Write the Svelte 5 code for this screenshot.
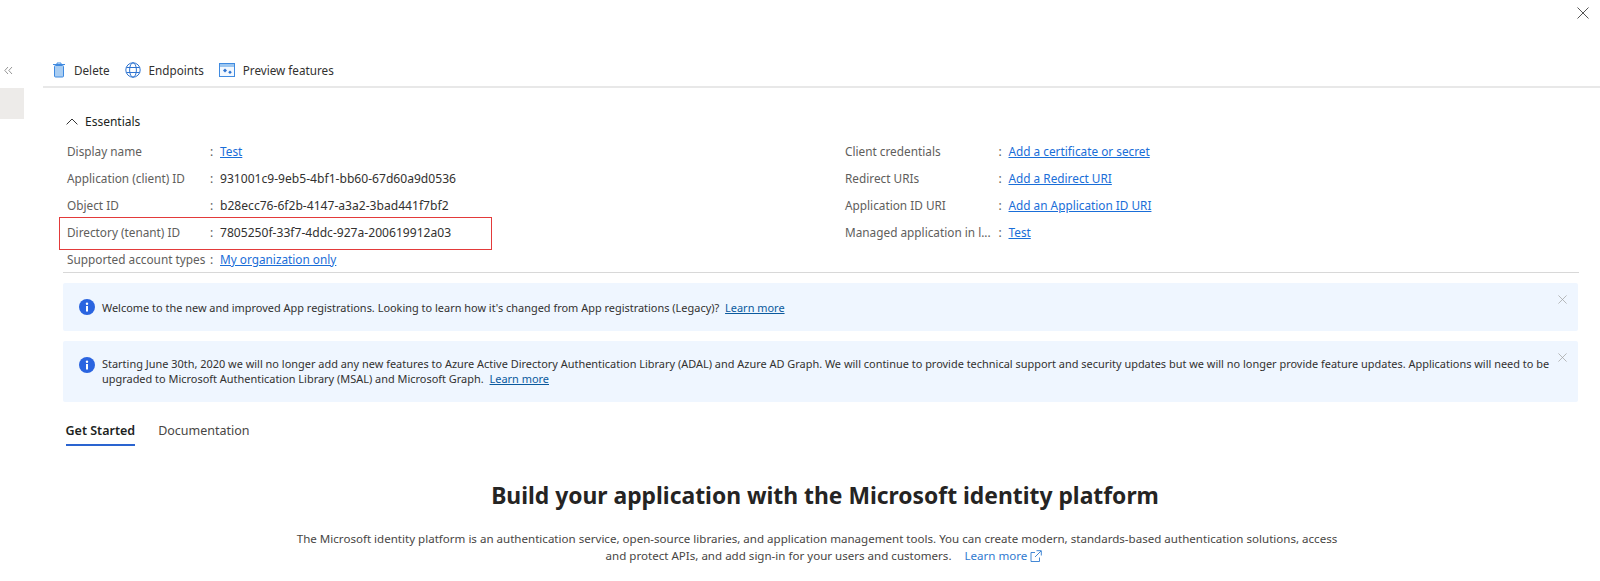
<script>
  const left = [
    ['Display name', 'Test', true],
    ['Application (client) ID', '931001c9-9eb5-4bf1-bb60-67d60a9d0536', false],
    ['Object ID', 'b28ecc76-6f2b-4147-a3a2-3bad441f7bf2', false],
    ['Directory (tenant) ID', '7805250f-33f7-4ddc-927a-200619912a03', false],
    ['Supported account types', 'My organization only', true]
  ];
  const right = [
    ['Client credentials', 'Add a certificate or secret'],
    ['Redirect URIs', 'Add a Redirect URI'],
    ['Application ID URI', 'Add an Application ID URI'],
    ['Managed application in l...', 'Test']
  ];
</script>

{#snippet info()}
  <svg class="info" viewBox="0 0 16 16" width="16" height="16">
    <circle cx="8" cy="8" r="8" fill="#2a64e0" />
    <rect x="7" y="7" width="2" height="5.5" fill="#fff" />
    <circle cx="8" cy="4.8" r="1.2" fill="#fff" />
  </svg>
{/snippet}

{#snippet dismiss()}
  <svg class="dismiss" viewBox="0 0 10 10" width="9" height="9">
    <path d="M.5.5l9 9M9.5.5l-9 9" stroke="#a0a0a0" stroke-width=".8" fill="none" />
  </svg>
{/snippet}

<div class="page">
  <svg class="close" viewBox="0 0 12 12" width="12" height="12">
    <path d="M.5.5l11 11M11.5.5l-11 11" stroke="#555" stroke-width="1" fill="none" />
  </svg>

  <aside class="side">
    <svg class="collapse" viewBox="0 0 9 9" width="9" height="9">
      <path d="M4 1L.8 4.5 4 8M8 1L4.8 4.5 8 8" stroke="#8a8a8a" stroke-width=".9" fill="none" />
    </svg>
    <div class="selected"></div>
  </aside>

  <main class="main">
    <nav class="commands">
      <span class="cmd first">
        <svg viewBox="0 0 14 16" width="14" height="16">
          <rect x="2.5" y="3.5" width="9" height="11.5" rx="1" fill="#a9cdf2" stroke="#3f8ae0" stroke-width="1" />
          <path d="M1 2.5h12M5 2.5V1h4v1.5" stroke="#3f8ae0" stroke-width="1" fill="none" />
        </svg>
        Delete
      </span>
      <span class="cmd">
        <svg viewBox="0 0 16 16" width="16" height="16">
          <g stroke="#2f74d0" stroke-width="1" fill="none">
            <circle cx="8" cy="8" r="7.2" />
            <ellipse cx="8" cy="8" rx="3.4" ry="7.2" />
            <path d="M1.4 5.5h13.2M1.4 10.5h13.2" />
          </g>
        </svg>
        Endpoints
      </span>
      <span class="cmd">
        <svg viewBox="0 0 16 14" width="16" height="14">
          <rect x=".5" y=".5" width="15" height="13" fill="#f3f8fe" stroke="#3f8ae0" />
          <rect x="1" y="1" width="14" height="3" fill="#9cc6f0" />
          <path d="M6 5.4L8 7.4 6 9.4 4 7.4zM11 7.4L12.8 9.2 11 11 9.2 9.2z" fill="#2f74d0" />
        </svg>
        Preview features
      </span>
    </nav>

    <section class="essentials">
      <div class="ess-title">
        <svg viewBox="0 0 12 7" width="12" height="7">
          <path d="M.6 6.4L6 1l5.4 5.4" stroke="#333" stroke-width="1" fill="none" />
        </svg>
        Essentials
      </div>
      <div class="grid">
        <div class="col">
          {#each left as [label, value, link]}
            <div class="row">
              <span class="label">{label}</span>
              <span class="colon">:</span>
              {#if link}<a class="link" href="#top">{value}</a>{:else}<span class="value">{value}</span>{/if}
            </div>
          {/each}
        </div>
        <div class="col col-right">
          {#each right as [label, value]}
            <div class="row">
              <span class="label">{label}</span>
              <span class="colon">:</span>
              <a class="link" href="#top">{value}</a>
            </div>
          {/each}
        </div>
      </div>
      <div class="highlight"></div>
    </section>

    <div class="banners">
      <div class="banner one">
        {@render info()}
        <p>Welcome to the new and improved App registrations. Looking to learn how it's changed from App registrations (Legacy)? <a class="dark" href="#top">Learn more</a></p>
        {@render dismiss()}
      </div>
      <div class="banner two">
        {@render info()}
        <p>Starting June 30th, 2020 we will no longer add any new features to Azure Active Directory Authentication Library (ADAL) and Azure AD Graph. We will continue to provide technical support and security updates but we will no longer provide feature updates. Applications will need to be upgraded to Microsoft Authentication Library (MSAL) and Microsoft Graph. <a class="dark" href="#top">Learn more</a></p>
        {@render dismiss()}
      </div>
    </div>

    <div class="tabs">
      <span class="tab active">Get Started</span>
      <span class="tab">Documentation</span>
    </div>

    <h1>Build your application with the Microsoft identity platform</h1>
    <p class="lead">
      <span class="first-line">The Microsoft identity platform is an authentication service, open-source libraries, and application management tools. You can create modern, standards-based authentication solutions, access</span><br />
      and protect APIs, and add sign-in for your users and customers. <a class="plain" href="#top">Learn more<svg viewBox="0 0 12 12" width="12" height="12"><path d="M5 2.5H1v9h8.5V7.5M6.5.7h4.8v4.8M11 1L5 7" stroke="#2f7ad0" stroke-width=".9" fill="none" /></svg></a>
    </p>
  </main>
</div>

<style>
  :global(body) {
    margin: 0;
    background: #fff;
  }
  .page {
    position: relative;
    display: flex;
    width: 1600px;
    height: 581px;
    overflow: hidden;
    font-family: "Noto Sans", "Open Sans", sans-serif;
    font-size: 12px;
    color: #323130;
    background: #fff;
  }
  .close {
    position: absolute;
    top: 7px;
    right: 11px;
  }
  .side {
    flex: 0 0 43px;
    padding-top: 66px;
  }
  .collapse {
    display: block;
    margin-left: 4px;
  }
  .selected {
    width: 24px;
    height: 31px;
    margin-top: 13px;
    background: #edebe9;
  }
  .main {
    flex: 1;
    min-width: 0;
  }
  .commands {
    display: flex;
    align-items: center;
    gap: 15px;
    height: 28px;
    margin-top: 56px;
    padding-left: 9px;
    padding-bottom: 2px;
    border-bottom: 2px solid #e8e8e8;
    font-size: 11.7px;
  }
  .cmd {
    display: flex;
    align-items: center;
    gap: 8px;
  }
  .essentials {
    position: relative;
    padding: 24px 0 0 20px;
  }
  .ess-title {
    display: flex;
    align-items: center;
    gap: 7px;
    height: 18px;
    margin-left: 3px;
    color: #201f1e;
  }
  .grid {
    display: flex;
    margin: 7px 21px 0 0;
    padding-left: 4px;
    border-bottom: 1px solid #d8d8d8;
  }
  .col {
    flex: 0 0 778px;
  }
  .row {
    display: flex;
    align-items: baseline;
    height: 27px;
    line-height: 29px;
    white-space: nowrap;
  }
  .label {
    width: 143px;
    color: #605e5c;
    font-size: 11.8px;
  }
  .col-right .label {
    width: 153.5px;
  }
  .colon {
    width: 10px;
    color: #605e5c;
  }
  .value {
    font-size: 12.1px;
  }
  .link {
    color: #1a6ed8;
    text-decoration: underline;
    font-size: 11.8px;
  }
  .highlight {
    position: absolute;
    left: 16px;
    top: 129px;
    width: 433px;
    height: 33px;
    border: 1px solid #e33a3a;
    box-sizing: border-box;
  }
  .banners {
    display: flex;
    flex-direction: column;
    gap: 10px;
    margin: 10px 22px 0 20px;
  }
  .banner {
    position: relative;
    display: flex;
    gap: 7px;
    background: #eff6ff;
    border-radius: 2px;
    padding: 0 58px 0 16px;
    line-height: 15px;
    font-size: 10.94px;
  }
  .banner.one {
    height: 48px;
    align-items: center;
  }
  .banner.two {
    height: 61px;
    padding-top: 15px;
    box-sizing: border-box;
    padding-right: 10px;
  }
  .banner.two .info {
    margin-top: 1px;
  }
  .banner p {
    margin: 0;
  }
  .info {
    flex: none;
  }
  .dismiss {
    position: absolute;
    right: 11px;
    top: 12px;
  }
  .dark {
    color: #0b5a9e;
    text-decoration: underline;
    margin-left: 3px;
  }
  .tabs {
    display: flex;
    gap: 23px;
    margin: 20px 0 0 22.5px;
  }
  .tab {
    padding-bottom: 5px;
    font-size: 12.5px;
    color: #484644;
  }
  .tab.active {
    font-weight: 600;
    color: #201f1e;
    border-bottom: 2px solid #2a64d0;
  }
  h1 {
    width: 1050px;
    margin: 33px 0 0 257px;
    font-size: 22.85px;
    line-height: 34px;
    font-weight: 700;
    text-align: center;
    color: #252423;
  }
  .lead {
    width: 1070px;
    margin: 17px 0 0 246px;
    line-height: 17px;
    font-size: 11.57px;
    text-align: center;
    color: #484644;
  }
  .first-line {
    padding-right: 14px;
  }
  .plain {
    margin-left: 10px;
    color: #2f7ad0;
    text-decoration: none;
  }
  .plain svg {
    margin-left: 3px;
    vertical-align: -2px;
  }
</style>
